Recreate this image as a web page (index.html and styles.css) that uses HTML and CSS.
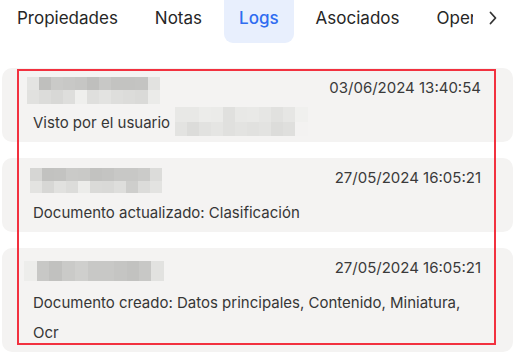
FILE: index.html
```html
<!DOCTYPE html>
<html lang="es">
<head>
<meta charset="utf-8">
<link rel="stylesheet" href="styles.css">
</head>
<body>
<div class="panel">
  <div class="tabbar">
    <div class="tabs">
      <div class="tab">Propiedades</div>
      <div class="tab">Notas</div>
      <div class="tab active">Logs</div>
      <div class="tab">Asociados</div>
      <div class="tab">Operaciones</div>
    </div>
    <button class="next" aria-label="Siguiente">
      <svg width="8" height="14" viewBox="0 0 8 14"><path d="M1.5 1.5 L6.5 7 L1.5 12.5" fill="none" stroke="#333" stroke-width="1.8" stroke-linecap="round" stroke-linejoin="round"/></svg>
    </button>
  </div>

  <div class="logs">
    <div class="log">
      <div class="log-head">
        <div class="pix pix-a"><div class="r r1"></div><div class="r r2"></div></div>
        <div class="date">03/06/2024 13:40:54</div>
      </div>
      <div class="msg">Visto por el usuario <span class="pix pix-b"><span class="r r1"></span><span class="r r2"></span></span></div>
    </div>
    <div class="log">
      <div class="log-head">
        <div class="pix pix-c"><div class="r r1"></div><div class="r r2"></div></div>
        <div class="date">27/05/2024 16:05:21</div>
      </div>
      <div class="msg">Documento actualizado: Clasificación</div>
    </div>
    <div class="log">
      <div class="log-head">
        <div class="pix pix-d"><div class="r r1"></div></div>
        <div class="date">27/05/2024 16:05:21</div>
      </div>
      <div class="msg">Documento creado: Datos principales, Contenido, Miniatura, Ocr</div>
    </div>
  </div>
  <div class="highlight"></div>
</div>
</body>
</html>
```

FILE: styles.css
```css
* { box-sizing: border-box; }
html, body { margin: 0; padding: 0; background: #fff; }
body {
  font-family: Inter, "Noto Sans", "Liberation Sans", sans-serif;
  color: #2b2b2b;
  overflow: hidden;
}
.panel {
  position: relative;
  width: 511px;
  margin-left: 2px;
}
.tabbar {
  display: flex;
  align-items: flex-start;
  height: 43px;
}
.tabs {
  display: flex;
  gap: 7px;
  width: 471px;
  overflow: hidden;
  white-space: nowrap;
}
.tab {
  flex: none;
  padding: 6px 15px 13px;
  font-size: 17px;
  line-height: 24px;
  color: #262626;
  border-radius: 0 0 9px 9px;
}
.tab.active {
  background: #e8effd;
  color: #2f6cf0;
  font-weight: 500;
}
.next {
  flex: none;
  width: 40px;
  height: 36px;
  border: 0;
  padding: 0 0 0 16px;
  margin: 0;
  background: #fff;
  display: flex;
  align-items: center;
  justify-content: flex-start;
}
.logs {
  display: flex;
  flex-direction: column;
  gap: 16px;
  margin-top: 25px;
}
.log {
  background: #f4f3f2;
  border-radius: 10px;
  padding: 8px 32px 4px 31px;
}
.log-head {
  display: flex;
  justify-content: space-between;
  align-items: flex-start;
  height: 24px;
  font-size: 15px;
  line-height: 24px;
}
.date { color: #3a3a3a; }
.msg {
  padding-top: 8px;
  font-size: 15px;
  line-height: 30px;
  color: #363636;
}
.pix { display: flex; flex-direction: column; }
.pix .r { display: block; }
.pix-a { margin: 1px 0 0 -6px; }
.pix-a .r { width: 133px; height: 13px; }
.pix-a .r1 {
  background: linear-gradient(90deg,
    #e4e4e2 0 12px, #bfbfbd 12px 24px, #cacac8 24px 36px, #c8c8c6 36px 48px,
    #c6c6c4 48px 60px, #bfbfbd 60px 72px, #c8c8c6 72px 84px, #c3c3c1 84px 96px,
    #c3c3c1 96px 108px, #c4c4c2 108px 121px, #e2e2e0 121px 133px);
}
.pix-a .r2 {
  height: 14px;
  background: linear-gradient(90deg,
    #e1e1df 0 12px, #dcdcda 12px 24px, #d8d8d6 24px 36px, #dededc 36px 48px,
    #efefed 48px 60px, #dfdfdd 60px 72px, #e3e3e1 72px 84px, #dededc 84px 96px,
    #dcdcda 96px 108px, #dadad8 108px 121px, #ebebe9 121px 133px);
}
.pix-b {
  display: inline-flex;
  vertical-align: top;
  margin-top: -1px;
  margin-left: 1px;
}
.pix-b .r { width: 133px; height: 15px; }
.pix-b .r1 {
  background: linear-gradient(90deg,
    #e8e8e6 0 12px, #e8e8e6 12px 24px, #ececea 24px 36px, #ebebe9 36px 48px,
    #e0e0de 48px 60px, #e8e8e6 60px 72px, #e9e9e7 72px 84px, #e6e6e4 84px 96px,
    #e1e1df 96px 108px, #e6e6e4 108px 120px, #f0f0ee 120px 133px);
}
.pix-b .r2 {
  height: 14px;
  background: linear-gradient(90deg,
    #e3e3e1 0 12px, #dcdcda 12px 24px, #e2e2e0 24px 36px, #e5e5e3 36px 48px,
    #e0e0de 48px 60px, #e3e3e1 60px 72px, #e1e1df 72px 84px, #e3e3e1 84px 96px,
    #dcdcda 96px 108px, #dfdfdd 108px 120px, #f3f2f1 120px 133px);
}
.pix-c { margin: 2px 0 0 -3px; }
.pix-c .r { width: 132px; height: 13px; }
.pix-c .r1 {
  background: linear-gradient(90deg,
    #d6d6d4 0 12px, #c2c2c0 12px 24px, #c3c3c1 24px 36px, #cacac8 36px 48px,
    #c9c9c7 48px 60px, #c2c2c0 60px 72px, #c4c4c2 72px 84px, #c8c8c6 84px 96px,
    #c8c8c6 96px 108px, #cbcbc9 108px 120px, #dcdcda 120px 132px);
}
.pix-c .r2 {
  height: 12px;
  background: linear-gradient(90deg,
    #e3e3e1 0 12px, #d7d7d5 12px 24px, #e1e1df 24px 36px, #dcdcda 36px 48px,
    #ececea 48px 60px, #dadad8 60px 72px, #d9d9d7 72px 84px, #dededc 84px 96px,
    #cececc 96px 108px, #dcdcda 108px 120px, #e3e3e1 120px 132px);
}
.pix-d { margin: 5px 0 0 -9px; }
.pix-d .r1 {
  width: 140px;
  height: 20px;
  background: linear-gradient(90deg,
    #ededeb 0 13px, #c8c8c6 13px 25px, #c1c1bf 25px 38px, #cacac8 38px 51px,
    #cfcfcd 51px 64px, #c8c8c6 64px 77px, #c8c8c6 77px 90px, #c5c5c3 90px 103px,
    #c2c2c0 103px 115px, #c8c8c6 115px 127px, #e2e2e0 127px 140px);
}
.highlight {
  position: absolute;
  left: 15px;
  top: 69px;
  width: 479px;
  height: 276px;
  border: 2px solid #f2313f;
  pointer-events: none;
}
```
